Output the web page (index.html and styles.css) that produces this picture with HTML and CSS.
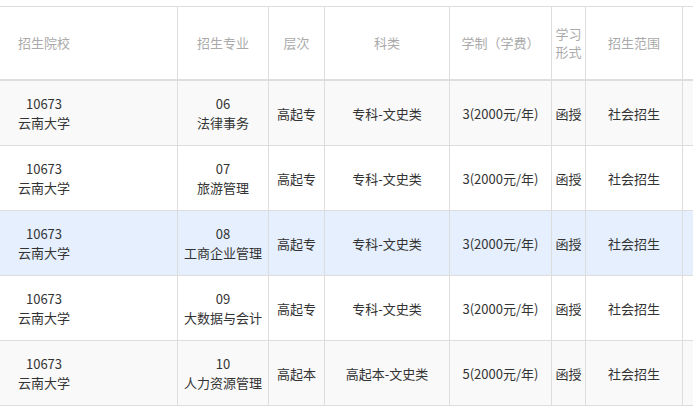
FILE: index.html
```html
<!DOCTYPE html>
<html lang="zh-CN">
<head>
<meta charset="utf-8">
<title>招生专业</title>
<link rel="stylesheet" href="styles.css">
</head>
<body>
<div class="wrap">
<table class="majors">
  <colgroup>
    <col class="c-school"><col class="c-major"><col class="c-level"><col class="c-type"><col class="c-years"><col class="c-form"><col class="c-scope"><col class="c-more">
  </colgroup>
  <thead>
    <tr>
      <th class="first">招生院校</th>
      <th>招生专业</th>
      <th>层次</th>
      <th>科类</th>
      <th>学制（学费）</th>
      <th class="narrow">学习形式</th>
      <th>招生范围</th>
      <th></th>
    </tr>
  </thead>
  <tbody>
    <tr class="odd">
      <td class="first"><span class="stack">10673<br>云南大学</span></td>
      <td>06<br>法律事务</td>
      <td>高起专</td>
      <td>专科-文史类</td>
      <td>3(2000元/年)</td>
      <td>函授</td>
      <td>社会招生</td>
      <td></td>
    </tr>
    <tr>
      <td class="first"><span class="stack">10673<br>云南大学</span></td>
      <td>07<br>旅游管理</td>
      <td>高起专</td>
      <td>专科-文史类</td>
      <td>3(2000元/年)</td>
      <td>函授</td>
      <td>社会招生</td>
      <td></td>
    </tr>
    <tr class="odd hover">
      <td class="first"><span class="stack">10673<br>云南大学</span></td>
      <td>08<br>工商企业管理</td>
      <td>高起专</td>
      <td>专科-文史类</td>
      <td>3(2000元/年)</td>
      <td>函授</td>
      <td>社会招生</td>
      <td></td>
    </tr>
    <tr>
      <td class="first"><span class="stack">10673<br>云南大学</span></td>
      <td>09<br>大数据与会计</td>
      <td>高起专</td>
      <td>专科-文史类</td>
      <td>3(2000元/年)</td>
      <td>函授</td>
      <td>社会招生</td>
      <td></td>
    </tr>
    <tr class="odd">
      <td class="first"><span class="stack">10673<br>云南大学</span></td>
      <td>10<br>人力资源管理</td>
      <td>高起本</td>
      <td>高起本-文史类</td>
      <td>5(2000元/年)</td>
      <td>函授</td>
      <td>社会招生</td>
      <td></td>
    </tr>
  </tbody>
</table>
</div>
</body>
</html>
```

FILE: styles.css
```css
html, body {
  margin: 0;
  padding: 0;
  background: #fff;
}

.wrap {
  width: 693px;
  height: 413px;
  overflow: hidden;
  padding-top: 6px;
  box-sizing: border-box;
}

.majors {
  table-layout: fixed;
  width: 783px;
  border-collapse: separate;
  border-spacing: 0;
  font-family: "Noto Sans CJK SC", "Noto Sans", sans-serif;
  font-size: 13px;
  line-height: 19px;
  color: #333;
}

.c-school { width: 178px; }
.c-major { width: 91px; }
.c-level { width: 56px; }
.c-type { width: 125px; }
.c-years { width: 102px; }
.c-form { width: 34px; }
.c-scope { width: 97px; }
.c-more { width: 100px; }

.majors th,
.majors td {
  box-sizing: border-box;
  border-right: 1px solid #ddd;
  border-bottom: 1px solid #ddd;
  text-align: center;
  vertical-align: middle;
  padding: 0 3px;
  overflow: hidden;
}

.majors th {
  height: 75px;
  border-top: 1px solid #ddd;
  border-bottom: 2px solid #ddd;
  font-weight: normal;
  color: #aaa;
  line-height: 18px;
}

.majors th.narrow {
  padding: 0 2px;
}

.majors td {
  height: 65px;
  background: #fff;
}

.majors tr.odd td {
  background: #f9f9f9;
}

.majors tr.hover td {
  background: #e5effd;
}

.majors .first {
  text-align: left;
  padding-left: 18px;
}

.stack {
  display: inline-block;
  text-align: center;
}
```
